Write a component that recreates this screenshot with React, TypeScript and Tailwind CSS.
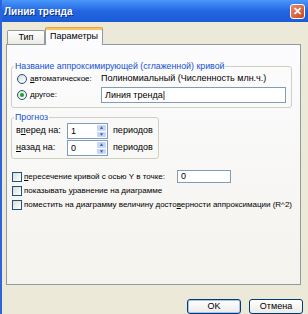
import React from "react";

const font = { fontFamily: '"Liberation Sans", Arial, sans-serif' };

function Radio({ checked }: { checked?: boolean }) {
  return (
    <span className="flex h-[10px] w-[10px] shrink-0 items-center justify-center rounded-full border border-[#1c5180] bg-gradient-to-br from-[#dcdcd5] to-white">
      {checked && <span className="h-[4px] w-[4px] rounded-full bg-[#21a121]" />}
    </span>
  );
}

function Check() {
  return (
    <span className="h-[10px] w-[10px] shrink-0 border border-[#1c5180] bg-gradient-to-br from-[#dcdcd5] to-white" />
  );
}

function Spinner({ value }: { value: string }) {
  return (
    <div className="flex h-[16px] w-[41px] border border-[#7f9db9] bg-white">
      <span className="flex-1 pl-[3px] leading-[14px]">{value}</span>
      <div className="flex w-[11px] flex-col gap-px bg-white p-px">
        <span className="flex flex-1 items-center justify-center rounded-[1px] bg-[#c6d5fc] text-[5px] leading-none text-[#4d6185]">
          ▲
        </span>
        <span className="flex flex-1 items-center justify-center rounded-[1px] bg-[#c6d5fc] text-[5px] leading-none text-[#4d6185]">
          ▼
        </span>
      </div>
    </div>
  );
}

function Group({ title, className, children }: { title: string; className: string; children: React.ReactNode }) {
  return (
    <div className={`relative rounded-[3px] border border-[#d0d0bf] ${className}`}>
      <span className="absolute -top-[7px] left-[2px] whitespace-nowrap bg-[#fbfbf9] px-px text-[8.8px] leading-[12px] text-[#1651d6]">{title}</span>
      {children}
    </div>
  );
}

export default function App() {
  return (
    <div
      className="flex h-[314px] w-[308px] flex-col overflow-hidden whitespace-nowrap border-l-2 border-[#2c65da] bg-[#ece9d8] text-[9px] text-black"
      style={font}
    >
      <div className="flex h-[22px] shrink-0 items-center justify-between bg-gradient-to-b from-[#4a97fa] via-[#2466e2] to-[#1a5bd6] pl-[2px] pr-[3px]">
        <span className="text-[10px] font-bold text-white [text-shadow:1px_1px_0_#0a2f87]">Линия тренда</span>
        <span className="flex h-[15px] w-[15px] items-center justify-center rounded-[3px] border border-white bg-gradient-to-br from-[#e98a66] to-[#d1431a] text-[11px] font-bold leading-none text-white">
          ✕
        </span>
      </div>

      <div className="flex h-[22px] items-end pl-[5px] pt-[5px]">
        <div className="flex h-[14px] w-[38px] items-center justify-center rounded-t-[2px] border border-b-0 border-[#919b9c] bg-gradient-to-b from-white to-[#ecebe5]">
          Тип
        </div>
        <div className="relative -mb-px flex h-[18px] w-[58px] items-center justify-center rounded-t-[2px] border border-b-0 border-[#919b9c] border-t-[#f0a03c] bg-[#fcfcfe] [box-shadow:inset_0_2px_0_#fbc460]">
          Параметры
        </div>
      </div>

      <div className="ml-[4px] flex h-[242px] w-[295px] flex-col border border-[#919b9c] bg-gradient-to-b from-[#fcfcfe] to-[#f4f3ee] px-[4px] pt-[21px]">
        <Group title="Название аппроксимирующей (сглаженной) кривой" className="h-[42px] w-[281px]">
          <div className="flex h-[19px] items-center pl-[5px] pt-[4px]">
            <Radio />
            <span className="ml-[3px] w-[71px] text-[8px]"><u>а</u>втоматическое:</span>
            <span>Полиномиальный (Численность млн.ч.)</span>
          </div>
          <div className="flex h-[17px] items-center pl-[5px]">
            <Radio checked />
            <span className="ml-[3px] w-[71px] text-[8px]"><u>д</u>ругое:</span>
            <div className="h-[16px] w-[185px] border border-[#7f9db9] bg-white pl-[3px] leading-[14px]">Линия тренда|</div>
          </div>
        </Group>

        <Group title="Прогноз" className="mt-[9px] h-[42px] w-[148px]">
          <div className="flex items-center pl-[4px] pt-[5px]">
            <span className="w-[51px]">в<u>п</u>еред на:</span>
            <Spinner value="1" />
            <span className="ml-[5px]">периодов</span>
          </div>
          <div className="flex items-center pl-[4px] pt-px">
            <span className="w-[51px]"><u>н</u>азад на:</span>
            <Spinner value="0" />
            <span className="ml-[5px]">периодов</span>
          </div>
        </Group>

        <div className="text-[8px]">
          <div className="mt-[11px] flex h-[13px] items-center pl-[1px]">
            <Check />
            <span className="ml-[2px] w-[153px]"><u>п</u>ересечение кривой с осью Y в точке:</span>
            <div className="h-[13px] w-[54px] border border-[#7f9db9] bg-white pl-[3px] text-[9px] leading-[11px]">0</div>
          </div>
          <div className="mt-[1px] flex h-[13px] items-center pl-[1px]">
            <Check />
            <span className="ml-[2px]">показывать <u>у</u>равнение на диаграмме</span>
          </div>
          <div className="mt-[1px] flex h-[13px] items-center pl-[1px]">
            <Check />
            <span className="ml-[2px]">поместить на диаграмму величину досто<u>в</u>ерности аппроксимации (R^2)</span>
          </div>
        </div>
      </div>

      <div className="flex justify-end gap-[8px] pr-[5px] pt-[14px]">
        <button className="h-[15px] w-[54px] rounded-[3px] border border-[#003c74] bg-gradient-to-b from-white to-[#ecebe6] text-[9px] [box-shadow:inset_0_0_0_1px_#a8c4f5]">
          OK
        </button>
        <button className="h-[15px] w-[54px] rounded-[3px] border border-[#003c74] bg-gradient-to-b from-white to-[#ecebe6] text-[9px]">
          Отмена
        </button>
      </div>
    </div>
  );
}
